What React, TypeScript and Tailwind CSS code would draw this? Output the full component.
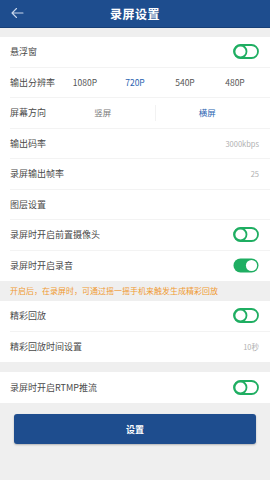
import React from "react";

const FONT = { fontFamily: '"Noto Sans CJK SC", "Noto Sans", sans-serif' };

function Toggle({ on }: { on?: boolean }) {
  if (on) {
    return (
      <svg width="26" height="15" viewBox="0 0 26 15">
        <rect x="0.5" y="0.5" width="25" height="14" rx="7" fill="#1fae62" />
        <circle cx="18.5" cy="7.5" r="5.6" fill="#ffffff" />
      </svg>
    );
  }
  return (
    <svg width="26" height="15" viewBox="0 0 26 15">
      <rect x="1" y="1" width="24" height="13" rx="6.5" fill="#fff" stroke="#1fae62" strokeWidth="1.8" />
      <circle cx="7.5" cy="7.5" r="6" fill="#fff" stroke="#1fae62" strokeWidth="1.8" />
    </svg>
  );
}

function Row({ label, children, last }: { label: string; children?: React.ReactNode; last?: boolean }) {
  return (
    <div className="pl-[10px]">
      <div
        className={`h-[30.5px] flex items-center justify-between pr-[11px] ${last ? "" : "border-b border-[#f3f3f3]"}`}
      >
        <span className="text-[9px] text-[#4a4a4a]">{label}</span>
        {children}
      </div>
    </div>
  );
}

const RESOLUTIONS = ["1080P", "720P", "540P", "480P"];

export default function App() {
  return (
    <div className="w-[270px] h-[480px] bg-[#efefef] overflow-hidden" style={FONT}>
      {/* Header */}
      <div className="h-[28px] bg-[#1e4d8e] relative flex items-center justify-center border-b border-[#173f77]">
        <svg className="absolute left-[10px] top-[7px]" width="14" height="12" viewBox="0 0 14 12">
          <path d="M13 6H2M6.5 1.5L2 6l4.5 4.5" fill="none" stroke="#c9d7ec" strokeWidth="1.1" strokeLinecap="round" strokeLinejoin="round" />
        </svg>
        <span className="text-white text-[12px] font-bold tracking-[0.5px]">录屏设置</span>
      </div>

      {/* Section 1 */}
      <div className="mt-[9px] bg-white">
        <Row label="悬浮窗">
          <Toggle />
        </Row>
        <div className="pl-[10px]">
          <div className="h-[30.5px] flex items-center border-b border-[#f3f3f3] pr-[10px]">
            <span className="w-[50px] text-[9px] text-[#4a4a4a]">输出分辨率</span>
            <div className="flex-1 grid grid-cols-4">
              {RESOLUTIONS.map((r) => (
                <span
                  key={r}
                  className={`text-center text-[8.5px] ${r === "720P" ? "text-[#2a63b0]" : "text-[#555]"}`}
                >
                  {r}
                </span>
              ))}
            </div>
          </div>
        </div>
        <div className="pl-[10px]">
          <div className="h-[30.5px] flex items-center border-b border-[#f3f3f3] pr-[11px]">
            <span className="w-[41px] text-[9px] text-[#4a4a4a]">屏幕方向</span>
            <div className="flex-1 flex items-center">
              <span className="flex-1 text-center text-[8.5px] text-[#777]">竖屏</span>
              <span className="w-px h-[16px] bg-[#f2f2f2]" />
              <span className="flex-1 text-center text-[8.5px] text-[#2a63b0]">横屏</span>
            </div>
          </div>
        </div>
        <Row label="输出码率">
          <span className="text-[7.5px] text-[#b0b0b0]">3000kbps</span>
        </Row>
        <Row label="录屏输出帧率">
          <span className="text-[7.5px] text-[#b0b0b0]">25</span>
        </Row>
        <Row label="图层设置" />
        <Row label="录屏时开启前置摄像头">
          <Toggle />
        </Row>
        <Row label="录屏时开启录音" last>
          <Toggle on />
        </Row>
      </div>

      {/* Tip */}
      <div className="h-[20px] flex items-center px-[10px]">
        <span className="text-[8px] text-[#ef9a32]">开启后，在录屏时，可通过摇一摇手机来触发生成精彩回放</span>
      </div>

      {/* Section 2 */}
      <div className="bg-white">
        <Row label="精彩回放">
          <Toggle />
        </Row>
        <Row label="精彩回放时间设置" last>
          <span className="text-[7.5px] text-[#b0b0b0]">10秒</span>
        </Row>
      </div>

      {/* Section 3 */}
      <div className="mt-[10px] bg-white">
        <Row label="录屏时开启RTMP推流" last>
          <Toggle />
        </Row>
      </div>

      {/* Button */}
      <div className="px-[14px] mt-[11px]">
        <button className="w-full h-[30px] rounded-[3px] bg-[#1e4d8e] text-white text-[9px] font-bold shadow-[0_1px_2px_rgba(0,0,0,0.25)]">
          设置
        </button>
      </div>
    </div>
  );
}
